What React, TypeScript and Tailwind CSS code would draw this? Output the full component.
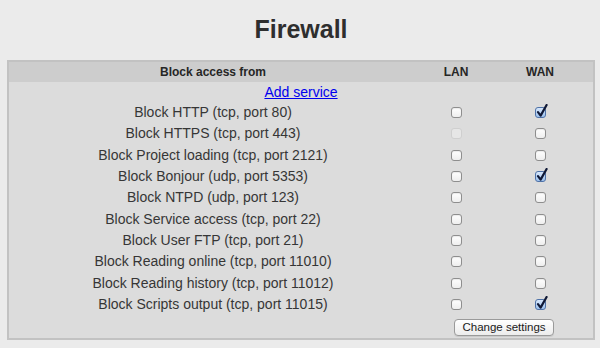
import React from "react";

type Row = { label: string; lan: "off" | "on" | "disabled"; wan: "off" | "on" | "disabled" };

const rows: Row[] = [
  { label: "Block HTTP (tcp, port 80)", lan: "off", wan: "on" },
  { label: "Block HTTPS (tcp, port 443)", lan: "disabled", wan: "off" },
  { label: "Block Project loading (tcp, port 2121)", lan: "off", wan: "off" },
  { label: "Block Bonjour (udp, port 5353)", lan: "off", wan: "on" },
  { label: "Block NTPD (udp, port 123)", lan: "off", wan: "off" },
  { label: "Block Service access (tcp, port 22)", lan: "off", wan: "off" },
  { label: "Block User FTP (tcp, port 21)", lan: "off", wan: "off" },
  { label: "Block Reading online (tcp, port 11010)", lan: "off", wan: "off" },
  { label: "Block Reading history (tcp, port 11012)", lan: "off", wan: "off" },
  { label: "Block Scripts output (tcp, port 11015)", lan: "off", wan: "on" },
];

function Box({ state }: { state: "off" | "on" | "disabled" }) {
  if (state === "on") {
    return (
      <span className="relative block w-[11px] h-[11px] rounded-[3px] border border-[#4f72a8] bg-gradient-to-b from-[#d7e7fb] to-[#9cc1ee]">
        <svg className="absolute left-[0px] top-[-4px]" width="12" height="14" viewBox="0 0 12 14">
          <path d="M2 8.2 L4.6 11.6 L10.6 1" fill="none" stroke="#0f1836" strokeWidth="2.2" strokeLinecap="round" strokeLinejoin="round" />
        </svg>
      </span>
    );
  }
  if (state === "disabled") {
    return <span className="block w-[11px] h-[11px] rounded-[3px] border border-[#cfcfcf] bg-[#e6e6e6]" />;
  }
  return (
    <span className="block w-[11px] h-[11px] rounded-[3px] border border-[#8e8e8e] bg-gradient-to-b from-[#ffffff] to-[#eeeeee] shadow-[inset_0_1px_1px_rgba(0,0,0,0.08)]" />
  );
}

export default function App() {
  return (
    <div className="w-[600px] h-[348px] bg-[#ebebeb] overflow-hidden font-['Liberation_Sans',Arial,sans-serif]">
      <div className="pt-[17px] h-[42px]">
        <h1 className="text-[25px] leading-[25px] font-bold text-center text-[#2e2e2e] pl-[2px]">Firewall</h1>
      </div>
      <div className="mt-[18px] ml-[7px] w-[588px] h-[280px] border-2 border-[#c2c2c2] bg-[#dcdcdc]">
        <div className="grid grid-cols-[408px_78px_90px] h-[20px] bg-[#cdcdcd] items-center text-[12px] font-bold text-[#262626]">
          <div className="text-center">Block access from</div>
          <div className="text-center">LAN</div>
          <div className="text-center">WAN</div>
        </div>
        <div className="h-[20px] flex items-center justify-center text-[14px]">
          <a href="#" className="text-[#0000ee] underline">Add service</a>
        </div>
        {rows.map((r) => (
          <div key={r.label} className="grid grid-cols-[408px_78px_90px] h-[21.33px] items-center text-[14px] text-[#363636]">
            <div className="text-center">{r.label}</div>
            <div className="flex justify-center"><Box state={r.lan} /></div>
            <div className="flex justify-center"><Box state={r.wan} /></div>
          </div>
        ))}
        <div className="grid grid-cols-[408px_168px] pt-[4px]">
          <div />
          <div className="flex justify-center pl-[6px]">
            <button className="w-[100px] h-[17px] rounded-[4px] border border-[#9a9a9a] bg-gradient-to-b from-[#ffffff] to-[#ececec] text-[11.5px] leading-[15px] text-[#1a1a1a] shadow-[0_1px_0_rgba(0,0,0,0.08)]">
              Change settings
            </button>
          </div>
        </div>
      </div>
    </div>
  );
}
